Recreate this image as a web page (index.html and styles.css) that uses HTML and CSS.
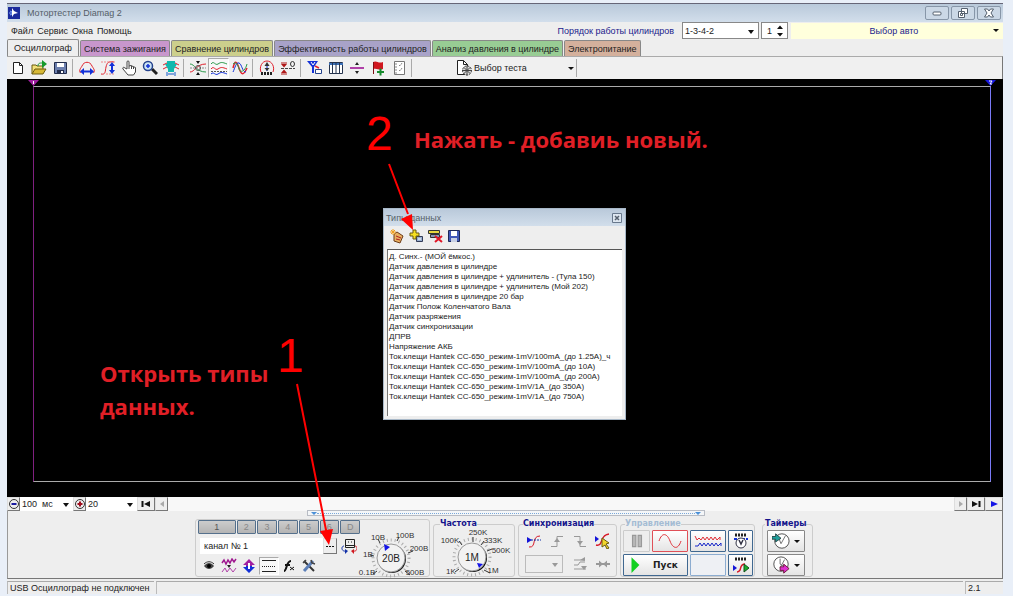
FILE: index.html
```html
<!DOCTYPE html>
<html lang="ru">
<head>
<meta charset="utf-8">
<title>Мотортестер Diamag 2</title>
<link rel="stylesheet" href="styles.css">
</head>
<body>
<div class="window">
  <header class="titlebar">
    <svg class="logo" viewBox="0 0 12 12"><rect width="12" height="12" fill="#1a2a9c"/><path d="M4 1v9l2-3 4-1-4-2z" fill="#fff"/><path d="M1 6h3M2 4l2 1M2 8l2-1" stroke="#7fa6ff"/></svg>
    <h1 class="title">Мотортестер Diamag 2</h1>
    <div class="winbtns">
      <button class="winbtn" aria-label="Свернуть"><svg class="ic10" viewBox="0 0 10 10"><rect x="1" y="4" width="8" height="3" rx="1" fill="#fff" stroke="#55606e"/></svg></button>
      <button class="winbtn" aria-label="Восстановить"><svg class="ic10" viewBox="0 0 10 10"><path d="M3.500.5h6v5h-6zM.5 3.500h6v6h-6zM2.500 5.500h2v2h-2z" fill="#fff" stroke="#55606e"/></svg></button>
      <button class="winbtn" aria-label="Закрыть"><svg class="ic10" viewBox="0 0 10 10"><path d="M.5 1h3L5 3l1.500-2h3L7 5l2.500 4h-3L5 7 3.500 9h-3L3 5z" fill="#fff" stroke="#55606e"/></svg></button>
    </div>
  </header>

  <div class="menurow">
    <nav class="menu"><a href="#">Файл</a><a href="#">Сервис</a><a href="#">Окна</a><a href="#">Помощь</a></nav>
    <label class="order" for="order">Порядок работы цилиндров</label>
    <span class="combo combo-order"><select id="order"><option>1-3-4-2</option></select></span>
    <span class="spin"><input type="text" value="1" aria-label="Цилиндр"><svg viewBox="0 0 6 12"><path d="M0 4l3-3.500L6 4zM0 8l3 3.500L6 8z" fill="#111"/></svg></span>
    <button class="auto"><span>Выбор авто</span><i class="tri"></i></button>
  </div>

  <nav class="tabs">
    <button class="tab tab-on">Осциллограф</button>
    <button class="tab tab-pink">Система зажигания</button>
    <button class="tab tab-olive">Сравнение цилиндров</button>
    <button class="tab tab-violet">Эффективность работы цилиндров</button>
    <button class="tab tab-green">Анализ давления в цилиндре</button>
    <button class="tab tab-tan">Электропитание</button>
  </nav>

  <div class="toolbar">
    <button class="tb" aria-label="Новый"><svg viewBox="0 0 16 16"><path d="M3.500 2.500h6l3 3v8h-9z" fill="#fff" stroke="#222"/><path d="M9.500 2.500v3h3" stroke="#222"/></svg></button>
    <button class="tb" aria-label="Открыть"><svg viewBox="0 0 16 16"><path d="M1 14V5h4l1 1h6v3" fill="#f3e27a" stroke="#6b5a10"/><path d="M1 14l3-5h11l-3 5z" fill="#d7b936" stroke="#6b5a10"/><path d="M11 0l5 4-5 4z" fill="#159a2c"/><path d="M7 6c0-3 2-3 4-3" stroke="#159a2c"/></svg></button>
    <button class="tb" aria-label="Сохранить"><svg viewBox="0 0 16 16"><path d="M2.500 2.500h12v11h-12z" fill="#6c7fae" stroke="#222c4c"/><path d="M5 3h7v4H5z" fill="#fff"/><path d="M5 10h7v4H5z" fill="#222c4c"/><path d="M9 11h2v2H9z" fill="#fff"/></svg></button>
    <i class="sep"></i>
    <button class="tb" aria-label="Ширина"><svg viewBox="0 0 16 16"><path d="M1.500 13c-2-3 .5-5 1.500-7 2-5 8-5 10 0 1 2 3.500 4 1.500 7" stroke="#e0202c"/><path d="M4 11.500h8" stroke="#1230d8" stroke-width="2"/><path d="M5 8v7l-4-3.500zM11 8v7l4-3.500z" fill="#1230d8"/></svg></button>
    <button class="tb" aria-label="Высота"><svg viewBox="0 0 16 16"><path d="M1 14c5 1 4-3 5-7s2-6 8-5" stroke="#e0202c"/><path d="M1 2h14M6 14h9" stroke="#e88" stroke-dasharray="2 1"/><path d="M12 4v8" stroke="#1230d8" stroke-width="2"/><path d="M9 6h6l-3-4zM9 10h6l-3 4z" fill="#1230d8"/></svg></button>
    <button class="tb" aria-label="Рука"><svg viewBox="0 0 16 16"><path d="M6 9V2c0-1.500 2-1.500 2 0v4l2-.5 2 1 2.500 1V12l-2 3H7L2 9c-1-2 1-2 2-1z" fill="#fff" stroke="#444"/><path d="M8 6v3M10.500 6v3M12.500 7v2" stroke="#444"/></svg></button>
    <button class="tb" aria-label="Лупа"><svg viewBox="0 0 16 16"><path d="M10 9l5 5" stroke="#222" stroke-width="3"/><circle cx="6" cy="6" r="4.500" fill="#cde4f5" stroke="#24428c" stroke-width="1.500"/><path d="M4 6h4M6 4v4" stroke="#1230d8" stroke-width="1.500"/></svg></button>
    <button class="tb" aria-label="Фильтр"><svg viewBox="0 0 16 16"><path d="M0 5l4-2 4 2 4-2 4 2M0 9l4-2h8l4 2" stroke="#e0202c"/><path d="M4 1h8v3h2l-3 5v3H5V9L2 4h2z" fill="#12b8ae"/><path d="M5 14h6M4 12v4M12 12v4" stroke="#1258c8"/></svg></button>
    <i class="sep"></i>
    <button class="tb" aria-label="Центр"><svg viewBox="0 0 16 16"><path d="M0 4c5 0 6 8 16 8" stroke="#2a9a4a"/><path d="M0 12c5 0 6-8 16-8" stroke="#e0202c"/><path d="M0 8h16" stroke="#888" stroke-dasharray="2 1"/><path d="M6 1h4L8 4zM6 15h4l-2-3z" fill="#111"/><circle cx="8" cy="8" r="2.500" stroke="#555"/></svg></button>
    <button class="tb tb-down" aria-label="Раздельно"><svg viewBox="0 0 16 16"><path d="M0 4c3-4 4 2 7 0s4-2 9 0" stroke="#2a9a4a"/><path d="M0 9c3-4 4 2 7 0s4-2 9 0" stroke="#e0202c"/><path d="M0 11.500h16" stroke="#555" stroke-dasharray="2 1"/><path d="M0 14c3-3 4 2 7 0s4-2 9 0" stroke="#1230d8"/></svg></button>
    <button class="tb" aria-label="Вместе"><svg viewBox="0 0 16 16"><path d="M1 8c2-9 4-6 6 0s4 9 8 0" stroke="#e0202c" stroke-width="1.500"/><path d="M1 12c2-4 3-10 6-9s3 9 7 9" stroke="#1230d8"/><path d="M1 4c3-3 5 1 6 5s6 3 8-5" stroke="#2a9a4a"/></svg></button>
    <i class="sep"></i>
    <button class="tb" aria-label="Авто"><svg viewBox="0 0 16 16"><path d="M2 12C0 7 3 1 8 1s8 6 6 11" stroke="#e0202c"/><path d="M8 4v7" stroke="#1230d8"/><path d="M5.500 6L8 2l2.500 4zM5.500 8h5L8 11z" fill="#333"/><path d="M2 13.500h12" stroke="#222" stroke-width="3" stroke-dasharray="2 1"/></svg></button>
    <button class="tb" aria-label="Ноль"><svg viewBox="0 0 16 16"><path d="M1 8.500h14" stroke="#444" stroke-dasharray="3 1"/><path d="M1 4h6L4 7.500zM1 13h6L4 9.500z" fill="#b01818"/><path d="M1 3h6M1 14h6" stroke="#b01818"/><ellipse cx="12.500" cy="4" rx="2" ry="2.500" stroke="#333"/></svg></button>
    <i class="sep"></i>
    <button class="tb" aria-label="Фильтр канала"><svg viewBox="0 0 16 16"><path d="M0 1h11L7 7v6H5V7z" fill="#1230d8"/><path d="M4 2l2 3 2-3" stroke="#fff"/><path d="M8.500 9.500h6v4h-6z" fill="#fff" stroke="#24428c"/><path d="M8 6l4 2" stroke="#e0202c" stroke-width="1.500"/></svg></button>
    <button class="tb" aria-label="Таблица"><svg viewBox="0 0 16 16"><path d="M1.500 2.500h13v11h-13z" fill="#fff" stroke="#26344e"/><path d="M1 4h14" stroke="#3b70b8" stroke-width="2"/><path d="M4.500 3v11M8 3v11M11.500 3v11" stroke="#26344e"/></svg></button>
    <button class="tb" aria-label="Разделить"><svg viewBox="0 0 16 16"><path d="M1 8h14" stroke="#b040a8" stroke-width="2"/><path d="M6 5l2-3 2 3zM6 11l2 3 2-3z" fill="#222"/></svg></button>
    <button class="tb" aria-label="Флаг"><svg viewBox="0 0 16 16"><path d="M3 2c4-2 5 2 10 0v7c-4 2-5-1-10 0z" fill="#d01820"/><path d="M3.500 2v12" stroke="#801015"/><path d="M7 12h7M10.500 8.500v7" stroke="#158a2c" stroke-width="2"/></svg></button>
    <button class="tb" aria-label="Отчёт"><svg viewBox="0 0 16 16"><path d="M3.500 1.500h10v13h-10z" fill="#fff" stroke="#777"/><path d="M5 3v11M8 5l1 1 2-3M8 10l1 1 2-3" stroke="#888" stroke-dasharray="2 1"/></svg></button>
    <i class="sep"></i>
    <button class="test"><svg viewBox="0 0 18 16"><path d="M2.500.5h6l4 4v10h-10z" fill="#fff" stroke="#222"/><path d="M8.500.5v4h4" stroke="#222"/><circle cx="12" cy="10.500" r="4.500" fill="#ddd" stroke="#333" stroke-dasharray="2 1"/><path d="M7 10.500h10M12 5.500v10M9 7.500l6 6M15 7.500l-6 6" stroke="#444"/></svg><span>Выбор теста</span><i class="tri"></i></button>
    <i class="sep"></i>
  </div>

  <main class="scope">
    <div class="plot">
      <svg class="mark mark-l" viewBox="0 0 11 6"><path d="M0 0h11L5.500 6z" fill="#a020a0"/><path d="M5.500 1v3" stroke="#fff"/></svg>
      <svg class="mark mark-r" viewBox="0 0 11 6"><path d="M0 0h11L5.500 6z" fill="#1a1ae0"/><path d="M4 1h3L5 4h2" stroke="#fff"/></svg>
    </div>
  </main>

  <div class="navrow">
    <button class="nb" aria-label="Уменьшить"><svg viewBox="0 0 12 12"><circle cx="6" cy="6" r="4.500" stroke="#333"/><path d="M3.500 6h5" stroke="#1a1aa0" stroke-width="2"/></svg></button>
    <span class="combo combo-time"><select aria-label="Время"><option>100&nbsp; мс</option></select></span>
    <button class="nb" aria-label="Увеличить"><svg viewBox="0 0 12 12"><circle cx="6" cy="6" r="4.500" stroke="#333"/><path d="M3.500 6h5M6 3.500v5" stroke="#a01020" stroke-width="2"/></svg></button>
    <span class="combo combo-zoom"><select aria-label="Масштаб"><option>20</option></select></span>
    <button class="nb nb-wide" aria-label="В начало"><svg viewBox="0 0 12 12"><path d="M2.500 3v6" stroke="#111" stroke-width="2"/><path d="M10 3v6L4 6z" fill="#111"/></svg></button>
    <button class="nb" aria-label="Назад"><svg viewBox="0 0 12 12"><path d="M8 3v6L4 6z" fill="#aaa"/></svg></button>
    <div class="track"></div>
    <button class="nb" aria-label="Вперёд"><svg viewBox="0 0 12 12"><path d="M4 3v6l4-3z" fill="#aaa"/></svg></button>
    <button class="nb nb-wide" aria-label="В конец"><svg viewBox="0 0 12 12"><path d="M2 3v6l6-3z" fill="#111"/><path d="M9.500 3v6" stroke="#111" stroke-width="2"/></svg></button>
    <button class="nb nb-wide" aria-label="Пуск"><svg viewBox="0 0 12 12"><path d="M3 3v6l7-3z" fill="#1414e6"/></svg></button>
  </div>

  <section class="panel">
    <div class="splitter"><i class="stri"></i><i class="dots"></i><i class="stri"></i></div>
    <div class="groups">
      <div class="group g-chan">
        <div class="chan">
          <div class="chs"><button class="ch ch1">1</button><button class="ch">2</button><button class="ch">3</button><button class="ch">4</button><button class="ch">5</button><button class="ch">6</button><button class="ch">D</button></div>
          <div class="chname"><div class="field"><input type="text" value="канал № 1" aria-label="Канал"><button class="more" aria-label="Типы данных"><svg viewBox="0 0 10 10"><path d="M1 5.500h2M4 5.500h2M7 5.500h2" stroke="#111"/></svg></button></div>
            <svg class="ic16" viewBox="0 0 16 16"><path d="M4.500 1.500h9v8h-9z" fill="#eee" stroke="#222"/><path d="M5 7.500h8M7 4h1M10 4h1" stroke="#222"/><path d="M5 13C0 14 0 8 3 8" stroke="#1230a8"/><path d="M12 13c5 1 5-5 2-5" stroke="#d01820"/><path d="M4 11v5l3-3z" fill="#1230a8"/><path d="M13 11v5l-3-3z" fill="#d01820"/></svg></div>
          <div class="chic">
            <button class="tb" aria-label="Видимость"><svg viewBox="0 0 16 16"><path d="M3 8c3-4 7-4 10 0-3 4-7 4-10 0z" fill="#444"/><circle cx="8" cy="8" r="2" fill="#000"/><path d="M3 6c3-3 7-3 10 0" stroke="#333"/></svg></button>
            <button class="tb" aria-label="Сглаживание"><svg viewBox="0 0 16 16"><path d="M1 5l2-3 2 4 2-4 2 3 2-4 2 3 2-3" stroke="#a01890" stroke-width="1.500"/><path d="M1 14l3-4 2 4 3-4 3 4 3-4" stroke="#b040a8"/><path d="M6 7h4l-2 3z" fill="#222"/></svg></button>
            <button class="tb" aria-label="Сдвиг"><svg viewBox="0 0 16 16"><path d="M8 1l6 6h-3v1H5V7H2z" fill="#a020a0"/><path d="M8 15l6-6h-3V8H5v1H2z" fill="#1230d8"/><path d="M8 5v6" stroke="#fff" stroke-width="2"/></svg></button>
            <button class="tb tb-down" aria-label="Линии"><svg viewBox="0 0 16 16"><path d="M1 2.500h14M1 13.500h14" stroke="#222"/><path d="M1 8.500h14" stroke="#222" stroke-dasharray="1 1"/></svg></button>
            <button class="tb" aria-label="Функция"><svg viewBox="0 0 16 16"><path d="M3 13c3 0 2-10 7-10M4 7h5" stroke="#111" stroke-width="2"/><path d="M9 9l4 3M13 9l-4 3" stroke="#111"/></svg></button>
            <button class="tb" aria-label="Настройки"><svg viewBox="0 0 16 16"><path d="M3 3l10 10" stroke="#333" stroke-width="2"/><path d="M12 3L3 13" stroke="#5c7fb8" stroke-width="3"/><path d="M10 2l1 3 3 1M2 5l3-3" stroke="#444" stroke-width="1.500"/></svg></button>
          </div>
        </div>
        <svg class="knob" viewBox="0 0 76 58">
          <circle cx="36" cy="38" r="18" class="ticks"/><circle cx="37" cy="39" r="14" fill="#222"/><circle cx="36" cy="38" r="14" fill="#f2f2f2" stroke="#999"/>
          <path d="M25 23l-2-4M42 21l2-4M19 36l-4-1M53 33l5-2M22 51l-4 3M50 51l5 4" stroke="#333"/><path d="M29 24l6 3-5 4z" fill="#1414e6"/>
          <g class="kl"><text x="23" y="20">10В</text><text x="50" y="18">100В</text><text x="13" y="37">1В</text><text x="64" y="31">200В</text><text x="12" y="55">0.1В</text><text x="60" y="55">500В</text></g><text x="36" y="42" class="kv">20В</text>
        </svg>
      </div>
      <fieldset class="group g-freq"><legend>Частота</legend>
        <svg class="knob" viewBox="0 0 76 56">
          <circle cx="36" cy="32" r="18" class="ticks"/><circle cx="37" cy="33" r="14" fill="#111"/><circle cx="36" cy="32" r="14" fill="#f2f2f2" stroke="#999"/>
          <path d="M37 17v-5M26 20l-3-4M45 20l3-4M51 26l5-2M23 44l-4 3M48 45l6 3" stroke="#333"/><path d="M41 38l6 1-4 4z" fill="#1414e6"/>
          <g class="kl"><text x="42" y="10">250K</text><text x="14" y="18">100K</text><text x="57" y="18">333K</text><text x="65" y="28">500K</text><text x="15" y="49">1K</text><text x="57" y="48">1M</text></g><text x="36" y="36" class="kv">1M</text>
        </svg>
      </fieldset>
      <fieldset class="group g-sync"><legend>Синхронизация</legend>
        <div class="syncgrid">
          <button class="flat" aria-label="Уровень"><svg viewBox="0 0 16 16"><path d="M3 14c8 1 2-11 11-11" stroke="#d81828"/><path d="M1 4v6l5-3z" fill="#1414d8"/><path d="M5 7h10" stroke="#1230a8" stroke-dasharray="2 1"/></svg></button>
          <button class="flat" aria-label="Фронт"><svg viewBox="0 0 16 16"><path d="M2 13.500h6v-10h6" stroke="#999"/><path d="M5 9l3-4 3 4z" fill="#999"/></svg></button>
          <button class="flat" aria-label="Спад"><svg viewBox="0 0 16 16"><path d="M2 3.500h6v10h6" stroke="#999"/><path d="M5 8h6l-3 4z" fill="#999"/></svg></button>
          <button class="flat" aria-label="Курсор"><svg viewBox="0 0 16 16"><path d="M1 12c8 2 3-10 13-11" stroke="#d81828" stroke-width="1.500"/><path d="M0 3v6l4-3z" fill="#1414d8"/><path d="M7 5l7 5-3 1 3 4-2 1-2-4-3 2z" fill="#f2d62c" stroke="#6b5a10"/></svg></button>
          <span class="combo combo-sync"><select aria-label="Источник" disabled><option></option></select></span>
          <button class="flat" aria-label="Окно"><svg viewBox="0 0 16 16"><path d="M2 4h10M2 13h12M2 9h4l2-3h5" stroke="#999"/><path d="M8 4l5-3v4zM9 10h6l-3 4z" fill="#999"/></svg></button>
          <button class="flat" aria-label="Сжать"><svg viewBox="0 0 16 16"><path d="M1 8h14" stroke="#999" stroke-width="2"/><path d="M4 4.500v7L8 8zM12 4.500v7L8 8z" fill="#999"/></svg></button>
        </div>
      </fieldset>
      <fieldset class="group g-ctl"><legend class="dim">Управление</legend>
        <div class="ctlgrid">
          <button class="cb cb-dim" aria-label="Пауза"><svg viewBox="0 0 16 16"><path d="M4 3h3v10H4zM9 3h3v10H9z" fill="#b8b8b8" stroke="#999"/></svg></button>
          <button class="cb cb-red" aria-label="Синус"><svg viewBox="0 0 28 18"><path d="M3 9C6 0 11 1 14 9s8 9 11 0" stroke="#e03038"/></svg></button>
          <button class="cb cb-blue" aria-label="Запись"><svg viewBox="0 0 28 18"><path d="M1 4l2 4 2-2 2 2 2-3 2 3 2-3 2 3 2-3 2 3 2-3 2 3 3-3v3" stroke="#e03038"/><path d="M1 14h3l2-3 2 3 2-3 2 3 2-3 2 3 2-3 2 3 2-3 2 3 3-3v3" stroke="#1424c8"/></svg></button>
          <button class="cb cb-blue" aria-label="Авто время"><svg viewBox="0 0 18 18"><path d="M3 3h12" stroke="#222" stroke-width="3" stroke-dasharray="2 1"/><path d="M2 7h14" stroke="#1230d8" stroke-width="2" stroke-dasharray="3 1"/><circle cx="9" cy="11" r="5" fill="#fff" stroke="#334"/><path d="M7 8l2 4 2-4" stroke="#334" stroke-width="1.500"/></svg></button>
          <button class="cb cb-blue start"><svg viewBox="0 0 16 16"><path d="M4 1v14l7-7z" fill="#12d020"/></svg><span>Пуск</span></button>
          <button class="cb cb-empty" aria-label="Пусто"></button>
          <button class="cb cb-blue" aria-label="Авто пуск"><svg viewBox="0 0 18 18"><path d="M3 3h12" stroke="#222" stroke-width="3" stroke-dasharray="2 1"/><path d="M5 16c6 0 1-8 8-8" stroke="#d81828" stroke-width="1.500"/><path d="M1 9l4 3-4 3z" fill="#1414d8"/><path d="M12 8l5 4-5 4z" fill="#18b028" stroke="#14501c"/></svg></button>
        </div>
      </fieldset>
      <fieldset class="group g-tim"><legend>Таймеры</legend>
        <div class="timers">
          <button class="cb tim" aria-label="Таймер 1"><svg viewBox="0 0 20 20"><circle cx="11" cy="10" r="8" fill="#fff" stroke="#444"/><path d="M8 8l2 5 5-9" stroke="#666"/><path d="M0 5h4V2l6 5-6 4V8H0z" fill="#20a09c" stroke="#244"/></svg><i class="tri"></i></button>
          <button class="cb tim" aria-label="Таймер 2"><svg viewBox="0 0 20 20"><circle cx="10" cy="9" r="8" fill="#fff" stroke="#444"/><path d="M9 3v6l5 3M9 13l5-9" stroke="#666"/><path d="M9 12h4v-3l6 5-6 5v-3H9z" fill="#e030d0" stroke="#613"/></svg><i class="tri"></i></button>
        </div>
      </fieldset>
    </div>
  </section>

  <footer class="status"><span class="pane">USB Осциллограф не подключен</span><span class="pane"></span><span class="pane">2.1</span></footer>

  <section class="dialog" aria-label="Типы данных">
    <div class="dtitle"><span>Типы данных</span><button aria-label="Закрыть"><svg viewBox="0 0 10 10"><path d="M.5.5h9v9h-9z" fill="#dde6f0" stroke="#68788c"/><path d="M3 3l4 4M7 3L3 7" stroke="#55606e" stroke-width="1.500"/></svg></button></div>
    <div class="dtools">
      <button aria-label="Изменить"><svg viewBox="0 0 16 16"><path d="M5 6l3-2 6 4-3 7-6-2z" fill="#e8b060" stroke="#6a3a18"/><path d="M7 8l5 2M7 11l4 1" stroke="#b02020"/><path d="M4 1v6M1 4h6M2 2l4 4M6 2L2 6" stroke="#f0a020"/></svg></button>
      <button aria-label="Добавить"><svg viewBox="0 0 16 16"><path d="M8.500 8.500h6v5h-6z" fill="#9ab0d0" stroke="#333c58"/><path d="M10 11h3" stroke="#fff"/><path d="M5 2h3v3h3v3H8v3H5V8H2V5h3z" fill="#f6e020" stroke="#6b5a10"/></svg></button>
      <button aria-label="Удалить"><svg viewBox="0 0 16 16"><path d="M1.500 2.500h11v3h-11z" fill="#e8d840" stroke="#333"/><path d="M3.500 6.500h9v3h-9z" fill="#8898b8" stroke="#333"/><path d="M8 8l7 6M15 8l-7 6" stroke="#e01828" stroke-width="2"/></svg></button>
      <button aria-label="Сохранить"><svg viewBox="0 0 16 16"><path d="M2.500 2.500h11v11h-11z" fill="#4058b8" stroke="#1c2858"/><path d="M5 3h6v5H5z" fill="#fff"/><path d="M5 10h6v4H5z" fill="#c8d0e4"/></svg></button>
    </div>
    <ul class="dlist">
      <li>Д. Синх.- (МОЙ ёмкос.)</li><li>Датчик давления в цилиндре</li><li>Датчик давления в цилиндре + удлинитель - (Тула 150)</li><li>Датчик давления в цилиндре + удлинитель (Мой 202)</li><li>Датчик давления в цилиндре 20 бар</li><li>Датчик Полож Коленчатого Вала</li><li>Датчик разряжения</li><li>Датчик синхронизации</li><li>ДПРВ</li><li>Напряжение АКБ</li><li>Ток.клещи Hantek CC-650_режим-1mV/100mA_(до 1.25А)_ч</li><li>Ток.клещи Hantek CC-650_режим-1mV/100mA_(до 10А)</li><li>Ток.клещи Hantek CC-650_режим-1mV/100mA_(до 200А)</li><li>Ток.клещи Hantek CC-650_режим-1mV/1A_(до 350А)</li><li>Ток.клещи Hantek CC-650_режим-1mV/1A_(до 750А)</li>
    </ul>
  </section>

  <svg class="arrows" width="990" height="590"><path d="M382 160L401 210M290 380L320 531" stroke="#f00" stroke-width="2"/><path d="M406 226l-12-11 11-5zM322 541l-9-14 13-2z" fill="#f00"/></svg>
  <p class="num num2">2</p>
  <p class="note note2">Нажать - добавиь новый.</p>
  <p class="num num1">1</p>
  <p class="note note1">Открыть типы<br>данных.</p>
</div>
</body>
</html>
```
FILE: styles.css
```css
* { box-sizing: border-box; margin: 0; padding: 0; }
body {
  display: flex;
  min-height: 100vh;
  padding: 3px 10px 2px 7px;
  background: #e9eff8;
  font: 9px/12px "Liberation Sans", Arial, sans-serif;
  color: #222;
}
button, input, select { font: inherit; color: inherit; border: 0; background: none; border-radius: 0; }
button { display: flex; align-items: center; justify-content: center; }
svg { fill: none; flex: none; display: block; }
ul { list-style: none; }
a { color: inherit; text-decoration: none; }

.window { position: relative; flex: 1; min-width: 0; display: flex; flex-direction: column; background: #eee; border-top: 1px solid #667; }

.titlebar { display: flex; align-items: center; height: 18px; padding: 0 2px 0 1px; gap: 7px; background: linear-gradient(#b9c9da, #d2deeb); }
.logo { width: 12px; height: 12px; }
.title { flex: 1; font: 9px/12px "Liberation Sans", Arial, sans-serif; color: #555e68; }
.winbtns { display: flex; gap: 2px; }
.winbtn { width: 24px; height: 14px; border: 1px solid #8796a8; border-radius: 2px; background: #cbd8e6; }
.ic10 { width: 10px; height: 10px; }

.menurow { display: flex; align-items: center; height: 17px; }
.menu { flex: 1; display: flex; gap: 4px; padding-left: 4px; }
.order { color: #22228c; margin-right: 8px; }
.combo { position: relative; display: flex; background: #fff; }
.combo select { appearance: none; width: 100%; padding: 0 2px; outline: 0; }
.combo::after { content: ""; position: absolute; right: 4px; top: 50%; margin-top: -1px; border: 3px solid transparent; border-top: 4px solid #111; border-bottom: 0; }
.combo-order { width: 77px; height: 17px; border: 1px solid #888; margin-right: 2px; }
.spin { display: flex; align-items: center; width: 27px; height: 17px; border: 1px solid #888; background: #fff; margin-right: 3px; }
.spin input { width: 15px; padding-left: 5px; }
.spin svg { width: 6px; height: 12px; }
.auto { width: 212px; height: 16px; background: #ffffdc; color: #22228c; padding: 0 4px; }
.auto span { flex: 1; }
.tri { border: 3px solid transparent; border-top: 3px solid #111; border-bottom: 0; }

.tabs { display: flex; align-items: flex-end; height: 17px; gap: 1px; }
.tab { height: 16px; padding: 0 3px; border: 1px solid #888; border-bottom: 0; border-radius: 2px 2px 0 0; white-space: nowrap; }
.tab-on { height: 17px; padding: 0 6px; background: #eee; }
.tab-pink { background: #c896cc; }
.tab-olive { background: #cccf8c; }
.tab-violet { background: #a8a2c8; }
.tab-green { background: #98cc94; }
.tab-tan { background: #d4b09c; }

.toolbar { display: flex; align-items: center; height: 23px; border-top: 1px solid #aaa; border-right: 1px solid #777; background: #f0f0f0; }
.tb { width: 21px; height: 20px; }
.tb svg, .ic16 { width: 16px; height: 16px; }
.tb-down { border: 1px solid #aaa; border-right-color: #fff; border-bottom-color: #fff; background: #f8f8f8; }
.sep { width: 1px; height: 18px; margin: 0 3px 0 2px; background: #aaa; }
.test { margin-left: 40px; width: 119px; }
.test svg { width: 18px; height: 16px; }
.test span { flex: 1; text-align: left; padding-left: 1px; }

.scope { flex: 1; display: flex; min-height: 200px; padding: 7px 12px 15px 26px; background: #000; }
.plot { position: relative; flex: 1; border: 1px solid #aaa; border-left-color: #802080; border-right: 1px solid #7a7af8; }
.mark { position: absolute; top: -7px; width: 11px; height: 6px; }
.mark-l { left: -6px; }
.mark-r { right: -6px; }

.navrow { display: flex; height: 14px; background: #f8f8f8; }
.nb { width: 13px; height: 14px; border: 1px solid #ddd; border-right-color: #777; border-bottom-color: #777; background: #eee; }
.nb svg { width: 12px; height: 12px; }
.nb-wide { width: 18px; }
.combo-time { width: 53px; }
.combo-zoom { width: 51px; }
.track { flex: 1; }

.panel { border: 1px solid #777; border-top: 0; border-left-color: #999; padding-bottom: 1px; }
.splitter { display: flex; align-items: center; width: 398px; height: 6px; margin: -1px auto 3px 299px; padding: 0 3px; border: 1px solid #b8bcc4; background: #f4f6f8; }
.stri { border: 3px solid transparent; border-top: 3px solid #4a90d8; border-bottom: 0; }
.dots { flex: 1; border-top: 1px dotted #7aa8d8; }
.groups { display: flex; gap: 3px; padding-left: 187px; height: 58px; }
.group { border: 1px solid #ccc; border-radius: 3px; min-width: 0; }
legend { margin-left: 4px; font: bold 8px/10px "DejaVu Sans", sans-serif; color: #14148c; }
legend.dim { color: #a4bcd4; }
.g-chan { display: flex; width: 235px; padding: 0 2px; }
.chan { width: 162px; }
.chs { display: flex; gap: 1px; }
.ch { width: 20px; height: 14px; border: 1px solid #55708c; border-radius: 1px; background: linear-gradient(#ccc, #b4b4b4); color: #888; }
.ch1 { width: 38px; color: #555; }
.chname { display: flex; align-items: center; gap: 4px; margin: 4px 0 3px 2px; }
.field { display: flex; width: 137px; height: 16px; background: #fff; }
.field input { flex: 1; min-width: 0; padding-left: 4px; }
.more { width: 14px; background: #eee; border: 1px solid #ddd; border-right-color: #777; border-bottom-color: #777; }
.more svg { width: 10px; height: 10px; }
.chic { display: flex; padding-left: 1px; }
.chic .tb { width: 20px; height: 18px; }
.knob { width: 76px; }
.ticks { stroke: #aaa; stroke-width: 3px; stroke-dasharray: 1px 3px; }
.kl { font-size: 8px; text-anchor: middle; fill: #333; }
.kv { font-size: 10px; text-anchor: middle; fill: #222; }
.g-chan .knob { margin-left: -5px; height: 58px; }
.g-freq { width: 82px; padding-left: 2px; }
.g-freq .knob { height: 56px; margin-top: -4px; }
.g-sync { width: 99px; }
.g-ctl { width: 135px; }
.g-tim { width: 51px; margin-left: 4px; }
.g-tim legend { margin-left: 2px; }
.syncgrid { display: grid; grid-template-columns: repeat(4, 22px); grid-auto-rows: 22px; gap: 1px; margin: 1px 4px; }
.flat svg { width: 16px; height: 16px; }
.combo-sync { grid-column: span 2; width: 38px; height: 18px; margin: 2px; border: 1px solid #bbb; background: #eee; }
.combo-sync::after { border-top-color: #999; }
.ctlgrid { display: grid; grid-template-columns: 27px 36px 36px 25px; grid-auto-rows: 22px; gap: 2px; margin: 1px 2px; }
.cb { border: 1px solid #888; border-radius: 1px; background: linear-gradient(#fff, #e4e4e4); }
.cb svg { height: 18px; }
.cb-dim { border-color: #ccc; background: #eee; }
.cb-red { border-color: #e05058; }
.cb-blue { border-color: #406890; }
.cb-empty { border-color: #8cacd0; background: #eef0f4; }
.start { grid-column: span 2; font: bold 9px/12px "DejaVu Sans", sans-serif; justify-content: flex-start; padding-left: 3px; }
.start span { padding-left: 8px; }
.timers { display: grid; grid-template-columns: 38px; grid-auto-rows: 22px; gap: 2px; margin: 1px 4px; }
.tim { gap: 4px; }

.status { display: flex; gap: 2px; margin-top: 2px; height: 13px; }
.pane { padding-left: 2px; border-top: 1px solid #aaa; border-left: 1px solid #bbb; white-space: nowrap; }
.pane:nth-child(1) { width: 147px; }
.pane:nth-child(2) { flex: 1; }
.pane:nth-child(3) { width: 38px; }

.dialog { position: absolute; left: 376px; top: 204px; width: 243px; height: 212px; display: flex; flex-direction: column; padding: 0 3px 3px; background: #eee; border: 1px solid #a8b8c8; }
.dtitle { display: flex; justify-content: space-between; align-items: center; height: 17px; margin: 0 -3px; padding: 0 3px 0 2px; background: linear-gradient(#b9c9da, #d2deeb); color: #555e68; }
.dtitle svg { width: 10px; height: 10px; }
.dtools { display: flex; align-items: flex-start; gap: 3px; padding: 2px; height: 23px; }
.dtools svg { width: 16px; height: 16px; }
.dlist { flex: 1; padding: 2px 0 0 1px; overflow: hidden; background: #fff; border-top: 1px solid #555; border-left: 1px solid #777; font-size: 8px; line-height: 10px; white-space: nowrap; }

.arrows { position: absolute; left: 0; top: 0; pointer-events: none; }
.num { position: absolute; font-size: 48px; line-height: 48px; color: #f00; }
.num2 { left: 359px; top: 106px; }
.num1 { left: 270px; top: 328px; }
.note { position: absolute; font: bold 22px/33px "Open Sans", sans-serif; color: #e01f26; }
.note2 { left: 407px; top: 119px; }
.note1 { left: 93px; top: 353px; }
```
